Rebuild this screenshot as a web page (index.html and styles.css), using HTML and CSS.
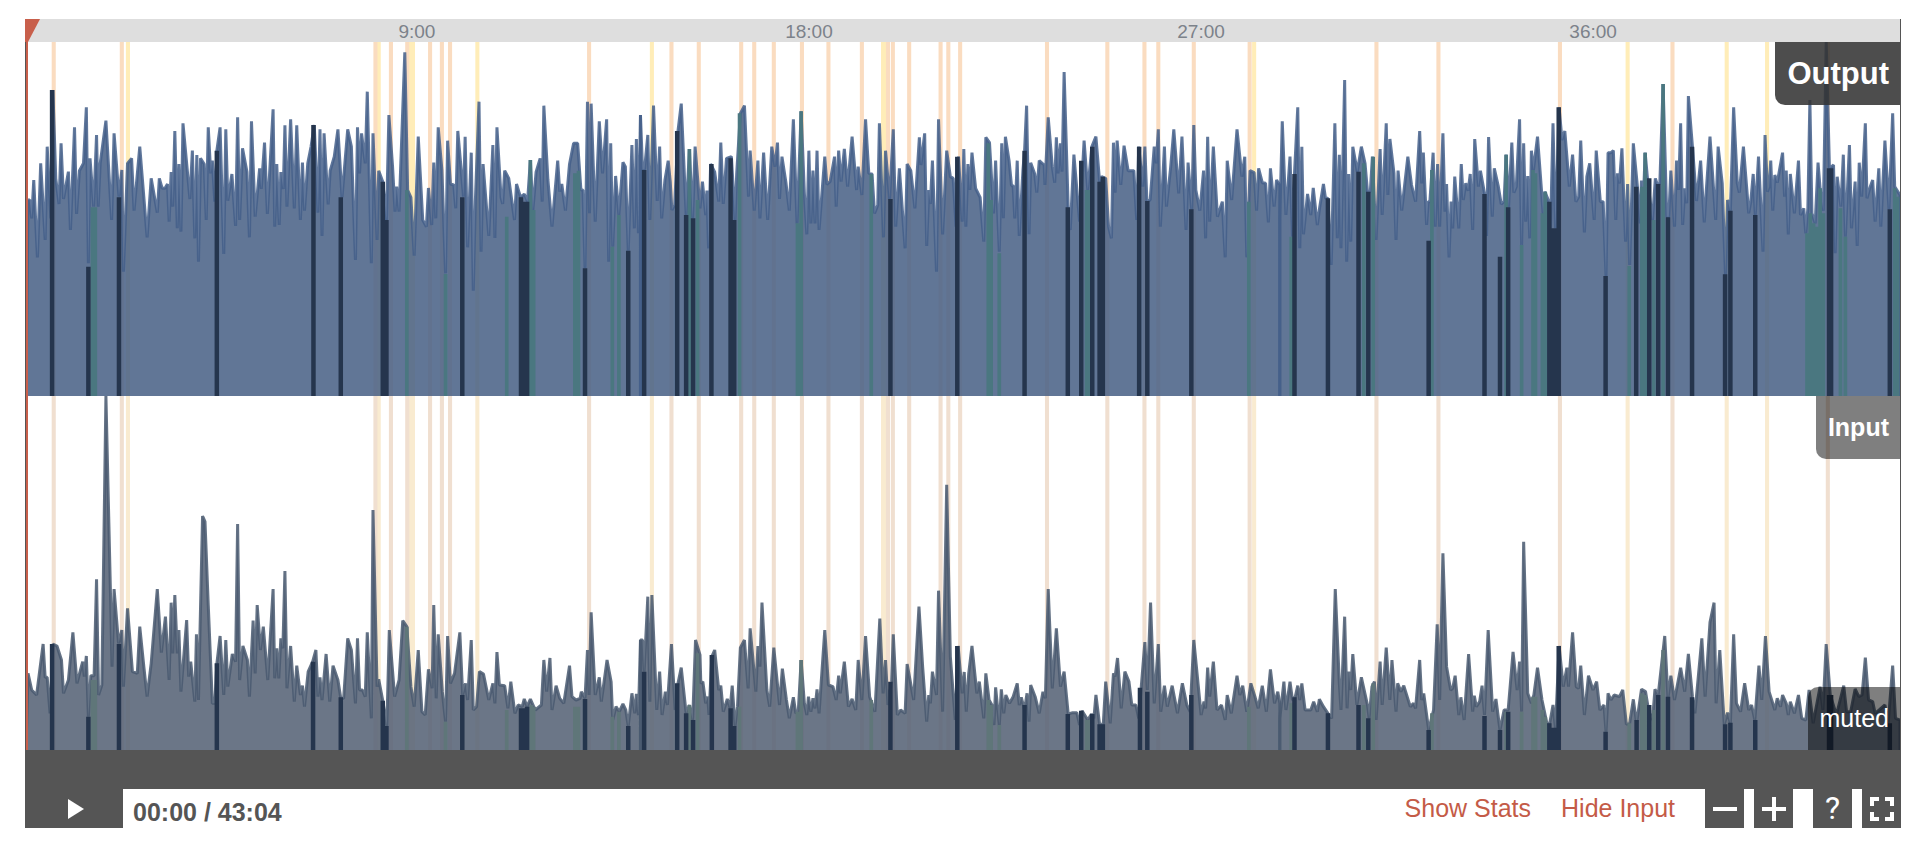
FILE: index.html
```html
<!DOCTYPE html>
<html lang="en">
<head>
<meta charset="utf-8">
<title>Audio player</title>
<link rel="stylesheet" href="styles.css">
</head>
<body>
<svg class="defs" width="0" height="0" aria-hidden="true">
  <defs>
    <g id="markers">
      <path class="mark-yellow" d="M311 0V1200M926 0V1200M1004 0V1200M1010 0V1200M1168 0V1200M1596 0V1200M2163 0V1200M2168 0V1200M3073 0V1200M3989 0V1200M4232 0V1200M4331 0V1200"/>
      <path class="mark-orange" d="M129 0V1200M296 0V1200M918 0V1200M956 0V1200M996 0V1200M1052 0V1200M1081 0V1200M1101 0V1200M1442 0V1200M1644 0V1200M1711 0V1200M1815 0V1200M1847 0V1200M1895 0V1200M1964 0V1200M2029 0V1200M2111 0V1200M2175 0V1200M2187 0V1200M2227 0V1200M2304 0V1200M2323 0V1200M2352 0V1200M2565 0V1200M2713 0V1200M2804 0V1200M2838 0V1200M2925 0V1200M3062 0V1200M3373 0V1200M3525 0V1200M3823 0V1200M4099 0V1200M4480 0V1200"/>
    </g>
  </defs>
</svg>
<main class="player">
  <div class="ruler">
    <span class="tick">9:00</span><span class="tick">18:00</span><span class="tick">27:00</span><span class="tick">36:00</span>
  </div>
  <section class="track track-output">
    <svg class="wave" viewBox="61 126 4596 1062" preserveAspectRatio="none" role="img" aria-label="Output waveform">
      <use href="#markers"/>
      <g>
        <polyline class="area" points="61,1188 66,600 70,600 75,655 80,540 89,772 97,490 108,720 113,440 122,655 127,270 134,535 142,612 147,430 153,597 165,515 170,690 180,382 185,642 192,512 202,490 209,322 214,790 218,475 227,620 234,405 238,620 243,490 257,362 271,660 277,400 289,590 296,510 300,815 310,490 320,475 326,632 331,563 340,440 358,712 368,535 383,638 388,535 395,565 402,565 408,552 412,665 417,516 421,620 426,393 432,685 436,492 441,695 446,370 463,597 469,452 475,715 480,465 484,785 489,475 498,492 503,660 508,382 514,520 518,482 524,605 529,452 537,382 546,762 551,388 556,602 566,522 575,678 580,352 585,660 592,445 603,516 609,712 614,364 623,650 634,505 638,567 646,428 653,642 667,328 671,680 676,492 682,675 686,516 692,567 696,376 701,620 710,358 719,625 725,376 734,660 739,488 744,632 752,490 760,440 768,375 777,638 782,388 787,708 792,400 802,613 807,512 817,470 826,388 836,592 850,388 859,440 869,780 874,382 879,520 884,400 893,490 898,275 908,790 912,400 922,720 926,512 936,545 945,660 951,345 960,500 966,635 970,560 976,635 990,157 997,570 1005,592 1013,767 1023,410 1034,660 1043,680 1048,564 1056,675 1061,488 1066,655 1072,382 1081,510 1090,820 1095,422 1102,552 1110,555 1115,625 1120,393 1134,590 1138,410 1144,742 1153,458 1158,872 1163,605 1172,305 1177,755 1182,492 1196,708 1206,435 1211,714 1216,382 1226,592 1230,612 1235,512 1245,535 1250,580 1259,660 1264,552 1274,592 1283,582 1291,605 1298,480 1304,632 1312,516 1322,475 1327,605 1331,317 1341,540 1351,680 1365,482 1370,575 1375,552 1384,632 1394,492 1404,430 1414,430 1422,570 1427,570 1432,805 1438,305 1443,640 1447,311 1457,665 1467,364 1475,520 1485,358 1490,785 1495,430 1500,740 1507,528 1515,645 1525,487 1531,500 1538,752 1547,435 1553,685 1558,417 1563,700 1568,345 1568,1188"/>
        <path class="green" d="M224 622V1188M231 622V1188M995 570V1188M1090 822V1188M1240 650V1188M1298 480V1188M1306 630V1188M1407 520V1188M1416 512V1188M1499 740V1188M1515 645V1188"/>
        <path class="dark" d="M125 270V1188M214 800V1188M289 592V1188M529 452V1188M766 375V1188M833 592V1188M936 545V1188M945 660V1188M1131 592V1188M1275 592V1188M1282 605V1188M1290 605V1188M1432 805V1188M1538 752V1188"/>
      </g>
      <g transform="translate(1568 0)">
        <polyline class="area" points="0,1188 0,345 5,508 10,508 18,405 23,660 32,317 41,603 47,440 52,655 60,540 68,482 73,545 77,630 84,615 92,393 100,311 112,645 120,447 128,655 134,440 146,625 152,545 160,645 163,572 167,745 172,492 182,516 192,605 197,428 203,612 211,475 223,470 232,660 236,520 245,340 255,317 265,590 269,452 279,632 288,482 293,655 302,458 312,660 322,440 330,500 336,428 341,597 347,470 357,550 365,632 375,358 384,670 394,334 402,580 408,703 413,452 418,670 423,512 428,670 433,452 438,690 452,470 457,553 465,545 476,470 480,620 486,452 492,545 500,447 508,560 519,410 530,570 534,500 543,585 552,358 560,520 568,522 574,640 582,615 586,370 596,712 601,452 611,597 620,388 626,680 635,505 649,745 654,492 663,512 673,625 684,412 688,495 697,400 702,738 707,570 711,612 716,482 726,815 731,358 741,703 751,452 760,530 767,535 774,680 780,470 789,665 793,447 798,680 803,492 808,570 813,458 822,565 833,592 842,725 847,412 856,428 866,640 871,482 880,755 886,430 890,655 895,410 904,482 910,557 914,557 918,655 924,482 929,708 938,510 942,452 947,317 953,703 957,488 967,522 972,578 978,482 990,495 992,555 1000,352 1010,500 1016,548 1020,412 1024,520 1030,430 1034,515 1039,216 1049,625 1054,690 1063,464 1077,665 1088,422 1097,570 1107,440 1117,410 1126,545 1131,530 1141,535 1148,680 1155,715 1160,428 1164,578 1169,422 1178,555 1186,437 1196,512 1210,512 1217,660 1222,440 1232,560 1237,440 1242,603 1250,600 1260,440 1265,490 1270,388 1275,680 1285,440 1290,620 1300,505 1308,388 1320,580 1328,410 1338,690 1343,488 1352,630 1357,375 1362,570 1372,632 1381,512 1386,715 1391,410 1396,665 1405,440 1415,650 1427,605 1434,772 1439,482 1450,600 1463,388 1475,530 1482,470 1487,772 1495,512 1505,518 1511,632 1516,505 1525,548 1533,550 1540,667 1545,505 1554,620 1560,540 1568,555 1568,1188"/>
        <path class="green" d="M120 447V1188M140 600V1188M243 340V1188M385 670V1188M394 334V1188M566 522V1188M853 430V1188M860 600V1188M880 760V1188M1094 570V1188M1100 570V1188M1492 605V1188"/>
        <path class="dark" d="M9 510V1188M90 393V1188M112 645V1188M129 655V1188M174 492V1188M221 475V1188M230 660V1188M613 597V1188M777 470V1188M942 452V1188M1048 622V1188M1081 482V1188M1108 440V1188M1126 545V1188M1134 530V1188M1223 440V1188M1243 603V1188M1351 628V1188"/>
      </g>
      <g transform="translate(3136 0)">
        <polyline class="area" points="0,1188 0,655 6,364 15,645 25,470 31,710 36,520 44,322 49,745 54,440 58,703 68,582 76,645 82,564 92,675 98,620 107,552 112,595 118,595 126,795 135,370 141,715 146,464 150,745 159,240 164,785 169,522 174,725 179,440 190,515 200,440 209,490 215,575 222,575 227,470 236,720 246,447 251,645 261,370 265,585 270,417 280,520 285,720 290,512 299,632 314,470 323,555 333,605 343,393 348,550 352,458 360,675 364,605 368,605 376,458 381,680 387,492 392,680 400,400 405,635 409,552 415,772 420,605 424,685 429,530 439,685 445,492 450,600 456,550 462,572 467,522 473,690 478,417 487,560 492,512 502,580 507,708 512,411 521,650 526,505 536,560 543,612 550,605 555,464 561,622 569,428 574,578 580,560 588,358 593,735 598,430 603,665 608,528 613,715 617,452 622,510 632,410 642,575 646,648 650,575 660,605 664,685 670,370 676,685 685,322 692,420 699,393 710,560 718,464 726,605 733,590 738,422 747,697 753,530 760,490 771,660 776,452 786,605 793,605 800,828 805,458 812,458 818,452 824,660 828,520 833,550 839,445 848,725 853,552 858,795 867,430 877,560 884,670 887,542 891,620 896,458 902,540 914,660 921,535 926,555 932,550 940,252 949,650 954,650 959,512 968,680 973,482 978,570 983,370 988,675 993,565 998,610 1002,288 1012,440 1022,603 1032,482 1041,667 1046,570 1055,410 1069,660 1075,440 1085,550 1089,690 1093,825 1098,600 1105,632 1113,322 1122,550 1127,578 1137,440 1150,640 1155,605 1161,522 1166,645 1174,470 1185,755 1190,405 1196,575 1200,560 1204,482 1209,632 1214,525 1220,548 1233,458 1238,590 1242,512 1247,703 1252,522 1262,640 1272,482 1277,645 1285,625 1290,700 1295,625 1300,300 1305,640 1313,670 1320,488 1325,565 1333,632 1340,126 1348,505 1358,495 1362,760 1367,530 1376,620 1382,464 1387,710 1397,435 1402,685 1411,545 1416,738 1421,488 1427,590 1436,370 1440,595 1448,560 1454,540 1460,665 1469,505 1474,680 1484,422 1494,628 1503,340 1508,560 1521,585 1521,1188"/>
        <path class="green" d="M28 710V1188M206 490V1188M229 470V1188M373 510V1188M555 464V1188M593 735V1188M621 510V1188M627 520V1188M644 640V1188M651 575V1188M857 798V1188M888 560V1188M896 458V1188M917 660V1188M940 252V1188M1293 700V1188M1301 640V1188M1309 670V1188M1317 680V1188M1325 565V1188M1333 640V1188M1375 625V1188M1387 710V1188M1508 565V1188M1515 590V1188"/>
        <path class="dark" d="M36 522V1188M118 595V1188M193 515V1188M217 575V1188M365 722V1188M502 582V1188M540 770V1188M560 622V1188M661 605V1188M670 685V1188M676 685V1188M684 322V1188M799 828V1188M874 560V1188M906 535V1188M928 552V1188M952 652V1188M1011 440V1188M1092 823V1188M1105 632V1188M1166 645V1188M1347 505V1188M1352 505V1188M1496 628V1188"/>
      </g>
    </svg>
    <span class="tag tag-top tag-output">Output</span>
  </section>
  <section class="track track-input">
    <svg class="wave" viewBox="61 18 4596 1062" preserveAspectRatio="none" role="img" aria-label="Input waveform">
      <use href="#markers"/>
      <g>
        <polyline class="area" points="61,1080 66,850 75,900 87,915 103,762 108,862 113,862 120,970 127,762 137,768 148,810 153,910 165,870 176,727 186,880 200,815 204,860 209,798 214,980 220,857 228,857 234,568 239,915 247,885 257,18 268,600 272,830 277,597 288,760 296,720 300,890 310,655 322,845 334,850 340,710 350,830 358,920 368,820 383,597 393,788 403,680 412,870 417,638 421,790 426,615 432,790 436,720 441,905 455,690 460,860 465,815 475,935 479,733 484,930 494,378 500,395 508,645 518,940 524,940 529,822 537,738 546,915 551,750 556,890 567,792 575,815 580,402 585,870 593,768 604,810 609,920 618,692 623,850 628,645 636,780 643,710 654,870 667,597 671,865 676,775 681,865 686,745 691,775 696,543 701,895 710,768 719,935 725,827 734,915 739,887 744,950 753,845 764,815 772,780 777,920 782,862 787,930 797,792 806,935 814,827 826,870 833,925 840,925 850,745 859,780 869,940 874,745 879,900 886,900 893,920 898,727 908,985 912,360 922,890 926,868 936,932 946,1008 952,720 965,920 976,870 985,692 995,710 1005,890 1013,950 1023,780 1032,965 1040,975 1048,838 1057,895 1061,645 1067,925 1072,733 1082,905 1090,995 1095,738 1102,880 1112,850 1125,727 1132,915 1139,880 1144,930 1153,750 1158,960 1166,950 1173,845 1183,852 1196,930 1206,880 1211,940 1216,786 1222,885 1235,887 1243,955 1250,875 1260,970 1268,945 1278,950 1283,927 1290,950 1298,927 1310,960 1325,945 1331,810 1338,905 1346,804 1351,960 1361,887 1370,925 1380,940 1394,827 1400,920 1410,930 1420,925 1423,905 1432,925 1438,780 1442,915 1447,667 1457,915 1467,862 1472,935 1486,810 1496,875 1500,990 1508,950 1516,965 1525,942 1532,960 1538,1008 1547,910 1554,970 1558,912 1563,975 1568,750 1568,1080"/>
        <path class="green" d="M224 870V1080M231 870V1080M995 710V1080M1090 995V1080M1240 960V1080M1300 945V1080M1306 950V1080M1407 950V1080M1416 950V1080M1499 980V1080M1515 965V1080"/>
        <path class="dark" d="M125 762V1080M214 980V1080M289 762V1080M529 820V1080M765 815V1080M833 922V1080M936 932V1080M945 1008V1080M1131 915V1080M1275 955V1080M1282 955V1080M1290 950V1080M1432 927V1080M1538 1008V1080"/>
      </g>
      <g transform="translate(1568 0)">
        <polyline class="area" points="0,1080 0,750 5,750 9,845 18,620 23,935 28,615 40,960 47,845 53,975 61,905 66,945 76,762 85,960 92,880 100,833 112,970 120,945 128,990 135,750 146,795 148,880 153,875 160,940 165,920 168,975 175,800 182,780 192,900 197,887 203,965 213,927 220,955 225,887 232,1008 238,950 245,773 255,750 264,895 269,715 283,905 288,768 293,830 298,638 310,900 317,950 327,773 341,945 348,836 358,930 365,985 375,922 381,970 387,965 394,810 402,940 408,975 412,920 418,965 423,925 428,955 433,898 438,970 452,720 461,885 472,890 480,930 486,857 490,910 500,815 510,950 519,927 528,960 534,810 543,930 552,738 562,920 575,965 587,686 595,910 601,810 607,945 616,875 620,733 630,975 638,960 649,970 654,822 670,930 683,650 692,830 702,995 707,915 711,940 716,845 726,915 731,602 741,965 751,284 760,800 772,990 779,768 789,910 794,846 799,965 805,850 813,768 825,910 831,875 842,985 847,850 855,930 862,945 867,1005 871,892 880,1005 885,898 891,970 896,915 905,940 914,920 924,880 929,945 934,922 942,960 948,910 953,995 957,885 968,920 978,970 987,905 993,925 1000,597 1010,895 1020,715 1030,890 1039,845 1049,972 1060,968 1070,968 1077,1005 1083,962 1097,990 1106,972 1112,985 1117,915 1126,1003 1135,1003 1141,875 1152,1000 1160,850 1164,860 1170,804 1179,955 1188,845 1198,875 1205,945 1215,945 1222,985 1228,893 1237,756 1243,900 1251,638 1260,940 1270,762 1276,965 1285,887 1292,950 1304,887 1317,970 1329,880 1340,945 1348,965 1357,750 1375,975 1382,935 1386,955 1391,833 1396,920 1405,815 1414,960 1425,945 1434,990 1439,915 1449,970 1463,857 1470,915 1477,887 1487,965 1497,880 1507,920 1515,955 1525,887 1535,965 1545,838 1555,940 1563,905 1568,940 1568,1080"/>
        <path class="green" d="M120 945V1080M140 790V1080M243 950V1080M385 965V1080M394 810V1080M566 930V1080M853 930V1080M860 945V1080M880 1005V1080M1094 990V1080M1100 990V1080M1492 950V1080"/>
        <path class="dark" d="M9 845V1080M90 880V1080M112 970V1080M129 990V1080M175 795V1080M221 955V1080M230 1008V1080M613 875V1080M777 768V1080M942 945V1080M1048 972V1080M1081 962V1080M1108 972V1080M1126 1003V1080M1134 1003V1080M1225 893V1080M1243 905V1080M1351 915V1080"/>
      </g>
      <g transform="translate(3136 0)">
        <polyline class="area" points="0,1080 0,985 10,875 15,960 25,875 31,930 38,920 44,887 49,930 54,880 62,960 76,960 83,935 92,965 97,928 107,950 118,970 127,985 136,597 146,880 150,960 159,680 165,955 169,845 174,900 179,792 189,945 200,862 215,945 219,985 226,890 232,875 236,990 246,815 251,945 261,773 270,930 275,810 285,965 289,880 297,905 304,887 320,950 328,940 333,955 343,810 348,930 353,910 365,1020 377,960 386,703 392,930 400,490 409,830 419,900 424,895 430,857 439,975 444,922 452,990 463,792 473,965 477,917 482,950 490,935 496,887 502,975 511,720 522,965 530,927 540,1020 550,960 560,960 572,786 582,900 588,815 593,965 598,455 608,910 617,940 623,915 632,833 643,930 655,1000 662,1000 670,945 676,1015 685,768 695,890 704,833 708,890 718,727 727,890 733,895 738,827 747,975 757,857 768,900 777,875 785,960 795,945 800,1025 805,910 812,930 820,915 833,920 841,900 850,1003 858,1000 867,928 875,1000 887,898 897,905 905,965 914,990 920,898 928,915 944,738 952,925 959,857 968,930 983,833 993,905 1002,792 1012,920 1018,970 1035,745 1043,920 1055,697 1065,638 1070,940 1079,780 1090,1003 1098,968 1105,1000 1113,733 1120,940 1130,965 1140,880 1150,960 1157,945 1165,990 1175,827 1182,930 1191,738 1200,905 1214,960 1220,925 1228,950 1233,915 1242,940 1247,975 1252,935 1262,970 1272,915 1280,985 1290,990 1298,900 1308,1000 1325,890 1332,960 1340,762 1350,915 1365,975 1383,887 1390,965 1400,965 1411,897 1420,920 1428,915 1436,803 1444,930 1454,935 1460,970 1470,960 1484,945 1492,1000 1503,827 1510,985 1521,990 1521,1080"/>
        <path class="green" d="M28 940V1080M206 945V1080M229 880V1080M373 970V1080M555 965V1080M593 965V1080M621 920V1080M627 920V1080M644 960V1080M651 980V1080M857 1000V1080M888 910V1080M896 915V1080M917 960V1080M940 780V1080"/>
        <path class="dark" d="M36 922V1080M118 970V1080M193 945V1080M217 985V1080M365 1020V1080M502 978V1080M540 1020V1080M560 965V1080M661 1000V1080M670 1013V1080M676 1013V1080M684 768V1080M799 1025V1080M875 990V1080M906 945V1080M928 915V1080M952 920V1080M1011 922V1080M1092 1003V1080M1105 998V1080M1166 990V1080M1347 915V1080M1352 915V1080M1496 1000V1080"/>
      </g>
    </svg>
    <span class="tag tag-top tag-input">Input</span>
    <span class="tag tag-bottom">muted</span>
  </section>
  <div class="strip"></div>
  <div class="playhead"></div>
  <div class="playhead-flag"></div>
</main>
<footer class="controls">
  <button class="btn btn-play" type="button" aria-label="Play">
    <svg width="16" height="20" viewBox="0 0 16 20"><path fill="#fff" d="M0 0L16 10L0 20z"/></svg>
  </button>
  <span class="time">00:00 / 43:04</span>
  <nav class="links">
    <a class="link" href="#stats">Show Stats</a>
    <a class="link" href="#input">Hide Input</a>
  </nav>
  <div class="group">
    <button class="btn" type="button" aria-label="Zoom out">
      <svg width="24" height="24" viewBox="0 0 24 24"><path class="icon" d="M0 12H24"/></svg>
    </button>
    <button class="btn" type="button" aria-label="Zoom in">
      <svg width="24" height="24" viewBox="0 0 24 24"><path class="icon" d="M0 12H24M12 0V24"/></svg>
    </button>
  </div>
  <div class="group">
    <button class="btn btn-help" type="button" aria-label="Help">?</button>
    <button class="btn" type="button" aria-label="Full screen">
      <svg width="24" height="24" viewBox="0 0 24 24"><path class="icon" d="M2 9V2H9M15 2H22V9M22 15V22H15M9 22H2V15"/></svg>
    </button>
  </div>
</footer>
</body>
</html>
```
FILE: styles.css
```css
* { box-sizing: border-box; }
body {
  margin: 0;
  padding: 19px 19px 0 25px;
  background: #fff;
  color: #555;
  font: 25px/39px "Liberation Sans", Arial, sans-serif;
}
.defs { position: absolute; }
.player {
  position: relative;
  border: solid #555;
  border-width: 0 1px;
}
.ruler {
  display: flex;
  height: 23px;
  padding-left: 10.4%;
  background: #dedede;
  color: #7c828a;
  font-size: 19px;
  line-height: 25px;
}
.tick { flex: 0 0 23.35%; text-align: center; }
.track {
  position: relative;
  height: 354px;
  overflow: hidden;
  background: #fff;
}
.wave { display: block; width: 100%; height: 100%; }
.mark-orange, .mark-yellow { fill: none; stroke-width: 10; }
.green { fill: none; stroke-width: 9; }
.dark { fill: none; stroke: #25354d; stroke-width: 11; }
.area {
  stroke-width: 3px;
  stroke-linejoin: bevel;
  vector-effect: non-scaling-stroke;
}
.track-output { --orange: #fadcc0; --yellow: #ffedb8; }
.track-input { --orange: #f0dfd0; --yellow: #f9ebd0; }
.mark-orange { stroke: var(--orange); }
.mark-yellow { stroke: var(--yellow); }
.track-output .area { fill: rgba(75, 99, 136, .88); stroke: rgba(68, 95, 137, .85); }
.track-input .area { fill: rgba(86, 99, 118, .88); stroke: rgba(73, 89, 112, .85); }
.track-output .green { stroke: #4a7780; }
.track-input .green { stroke: #5f7679; }
.tag {
  position: absolute;
  right: 0;
  padding: 0 11px 0 12px;
  background: rgba(0, 0, 0, .5);
  color: #fff;
  line-height: 63px;
}
.tag-top { top: 0; border-bottom-left-radius: 10px; font-weight: bold; }
.tag-output { background: rgba(50, 50, 50, .87); font-size: 31px; }
.tag-bottom { bottom: 0; border-top-left-radius: 10px; }
.strip { height: 39px; background: #555; }
.playhead {
  position: absolute;
  top: 0;
  bottom: 39px;
  left: 0;
  width: 2px;
  background: #c85f4b;
}
.playhead-flag {
  position: absolute;
  top: 0;
  left: -1px;
  width: 15px;
  height: 23px;
  background: #c85f4b;
  clip-path: polygon(0 0, 100% 0, 20% 100%, 0 100%);
}
.controls { display: flex; align-items: flex-start; }
.time { padding: 4px 0 0 10px; font-weight: bold; line-height: 38px; }
.links { display: flex; gap: 30px; margin-left: auto; padding-right: 30px; }
.link { color: #c45b47; text-decoration: none; }
.group { display: flex; gap: 10px; }
.group + .group { margin-left: 20px; }
.btn {
  display: flex;
  align-items: center;
  justify-content: center;
  width: 39px;
  height: 39px;
  padding: 0;
  border: 0;
  background: #555;
  color: #fff;
}
.btn-play { width: 98px; padding-left: 4px; }
.btn-help { font: 400 32px/39px Roboto, sans-serif; }
.icon { fill: none; stroke: #fff; stroke-width: 4; }
```
